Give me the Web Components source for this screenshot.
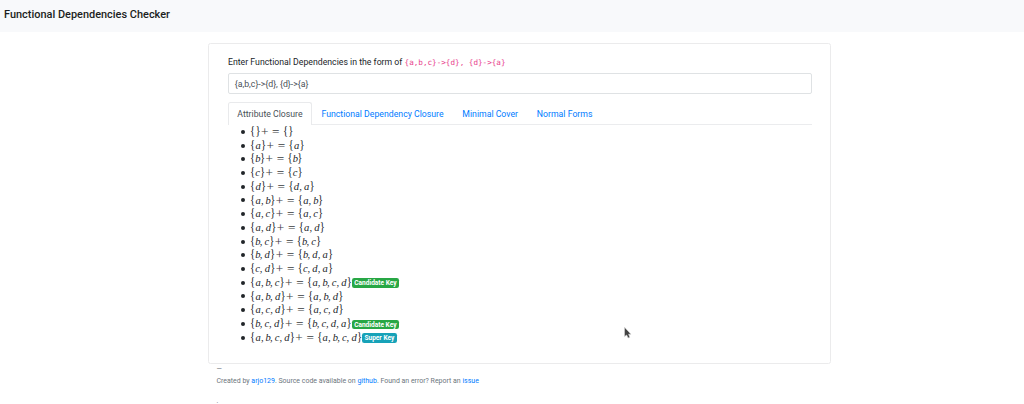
<!DOCTYPE html>
<html lang="en">
<head>
<meta charset="utf-8">
<title>Functional Dependencies Checker</title>
<style>
html{font-size:8.73px}
body{margin:0;background:#fff;color:#212529;font:400 1rem/1.5 Roboto,"Liberation Sans",sans-serif;height:404px;overflow:hidden}
</style>
</head>
<body>
<fd-app></fd-app>
<script>
const define = (name, html, setup) => customElements.define(name, class extends HTMLElement {
  constructor() {
    super();
    this.attachShadow({ mode: 'open' }).innerHTML = html;
  }
  connectedCallback() { if (setup) setup(this, this.shadowRoot); }
});

define('fd-header', `<style>
:host{display:flex;box-sizing:border-box;height:32.4px;padding:6.6px 4px 0;background:#f8f9fb;font-size:10.95px;font-weight:500;line-height:16px;color:#1b1e21}
</style><slot></slot>`);

define('fd-card', `<style>
:host{display:block;box-sizing:border-box;width:623px;height:321px;margin:10.6px 0 0 208px;padding:11px 19px 0 19px;border:1px solid #ebebec;border-radius:2.5px}
</style><slot></slot>`);

define('fd-field', `<style>
:host{display:block}
label{display:block;height:18px;line-height:14px}
code{font:7.64px/1 "DejaVu Sans Mono",monospace;color:#e83e8c}
div{box-sizing:border-box;width:584px;height:21px;padding:0 5.8px;border:1px solid #dfe2e4;border-radius:2px;line-height:20px;color:#495057}
</style><label><slot name="label"></slot> <code><slot name="form"></slot></code></label><div><slot></slot></div>`);

define('fd-tab', `<style>
:host{display:block;box-sizing:border-box;height:23px;padding:4.5px 8.5px 0 8.3px;border:1px solid transparent;border-bottom:0;border-radius:2.5px 2.5px 0 0;line-height:14px;color:#007bff;white-space:nowrap}
:host([active]){color:#495057;background:#fff;border-color:#e9eaec}
</style><slot></slot>`);

define('fd-tabs', `<style>
:host{display:flex;width:584px;height:22px;margin-top:8px;border-bottom:1px solid #ebecee}
</style><slot></slot>`);

define('fd-badge', `<style>
:host{display:block;box-sizing:border-box;height:9.6px;padding:0 2.4px;border-radius:2.2px;background:#28a745;color:#fff;font:700 6.55px/10px Roboto,sans-serif;white-space:nowrap}
:host([kind="super"]){background:#17a2b8}
</style><slot></slot>`);

/* Typeset set expression, one box per symbol with its math advance width */
define('fd-math', `<style>
:host{display:flex;font:10.58px/13.72px "Liberation Serif",serif;color:#212529}
span{display:block;text-align:center;white-space:pre}
i{font-style:normal;display:inline-block}
.a{width:.529em;font-style:italic}.b{width:.429em;font-style:italic}
.c{width:.433em;font-style:italic}.d{width:.52em;font-style:italic}
.brace{width:.5em}.brace i{transform:scaleY(1.12)}
.comma{width:.445em;text-align:left}
.op{width:.778em}.op i{font-size:1.25em;line-height:0;margin:0 -.2em;transform:translateY(1px);color:#3a3d40}
.eq{margin:0 .278em}
</style>`, (host, root) => {
  for (const ch of host.getAttribute('value')) {
    const s = document.createElement('span');
    if ('{}'.includes(ch)) s.className = 'brace';
    else if (ch === ',') s.className = 'comma';
    else if ('+='.includes(ch)) s.className = ch === '=' ? 'op eq' : 'op';
    else s.className = ch;
    if ('{}+='.includes(ch)) {
      const i = document.createElement('i'); i.textContent = ch; s.append(i);
    } else s.textContent = ch;
    root.append(s);
  }
});

define('fd-closures', `<style>
:host{display:block;padding:0 0 0 13px}
.row{display:flex;align-items:center;height:13.72px}
.dot{width:4px;height:4px;border-radius:50%;background:#212529;margin-right:5px}
fd-badge{margin-top:1px}
</style>`, (host, root) => {
  const rows = [['',''],['a','a'],['b','b'],['c','c'],['d','d,a'],['a,b','a,b'],['a,c','a,c'],['a,d','a,d'],['b,c','b,c'],['b,d','b,d,a'],['c,d','c,d,a'],
    ['a,b,c','a,b,c,d','Candidate Key'],['a,b,d','a,b,d'],['a,c,d','a,c,d'],['b,c,d','b,c,d,a','Candidate Key'],['a,b,c,d','a,b,c,d','Super Key']];
  root.innerHTML += rows.map(([l, r, key]) => `<div class="row"><span class="dot"></span><fd-math value="{${l}}+={${r}}"></fd-math>${key ? `<fd-badge kind="${key === 'Super Key' ? 'super' : 'candidate'}">${key}</fd-badge>` : ''}</div>`).join('');
});

define('fd-footer', `<style>
:host{display:block;padding:0 0 0 216.5px;font-size:6.98px;line-height:10.5px;color:#6c757d}
a{color:#007bff}
.created{margin-top:1.5px}.end{margin-top:10px}
</style><div>—</div><div class="created">Created by <a>arjo129</a>. Source code available on <a>github</a>. Found an error? Report an <a>issue</a></div><div class="end">.</div>`);

define('fd-cursor', `<style>
:host{position:absolute;left:623px;top:326px;width:9px;height:14px}
svg{display:block}
</style><svg width="9" height="14" viewBox="0 0 9 14"><path d="M1.5 1.2V10.6L3.6 9L5.1 12L6.8 11.2L5.6 8.2H8Z" fill="#444" stroke="#d9d9d9" stroke-width=".6"/></svg>`);

define('fd-app', `<style>:host{display:block}</style>
<fd-header>Functional Dependencies Checker</fd-header>
<fd-card>
<fd-field><span slot="label">Enter Functional Dependencies in the form of</span><span slot="form">{a,b,c}-&gt;{d}, {d}-&gt;{a}</span>{a,b,c}-&gt;{d}, {d}-&gt;{a}</fd-field>
<fd-tabs><fd-tab active>Attribute Closure</fd-tab><fd-tab>Functional Dependency Closure</fd-tab><fd-tab>Minimal Cover</fd-tab><fd-tab>Normal Forms</fd-tab></fd-tabs>
<fd-closures></fd-closures>
</fd-card>
<fd-footer></fd-footer>
<fd-cursor></fd-cursor>`);
</script>
</body>
</html>
